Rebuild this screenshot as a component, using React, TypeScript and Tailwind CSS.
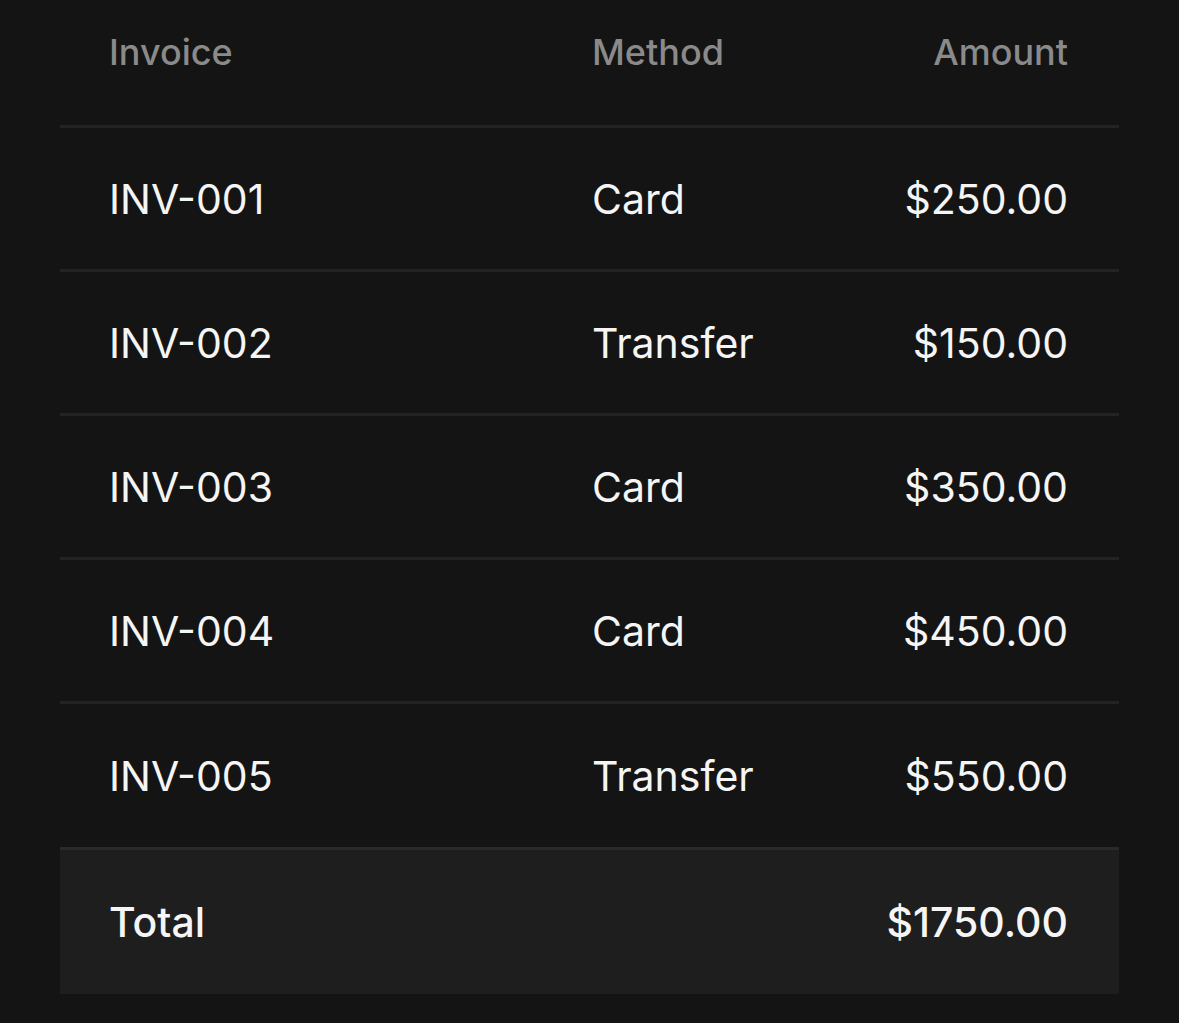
import React from "react"

type Invoice = {
  id: string
  method: string
  amount: string
}

const invoices: Invoice[] = [
  { id: "INV-001", method: "Card", amount: "$250.00" },
  { id: "INV-002", method: "Transfer", amount: "$150.00" },
  { id: "INV-003", method: "Card", amount: "$350.00" },
  { id: "INV-004", method: "Card", amount: "$450.00" },
  { id: "INV-005", method: "Transfer", amount: "$550.00" },
]

export default function App() {
  return (
    <div
      className="min-h-[1023px] w-full bg-[#141414] px-[60px] antialiased"
      style={{ fontFamily: "Inter, 'Noto Sans', sans-serif" }}
    >
      <table className="w-full table-fixed border-collapse">
        <colgroup>
          <col className="w-[532px]" />
          <col />
          <col className="w-[300px]" />
        </colgroup>
        <thead>
          <tr className="border-b-[3px] border-[#232323]">
            <th className="h-[126px] pb-[20px] pl-[49px] text-left align-middle text-[36px] font-medium text-[#8a8a8a]">
              Invoice
            </th>
            <th className="h-[126px] pb-[20px] text-left align-middle text-[36px] font-medium text-[#8a8a8a]">
              Method
            </th>
            <th className="h-[126px] pb-[20px] pr-[51px] text-right align-middle text-[36px] font-medium text-[#8a8a8a]">
              Amount
            </th>
          </tr>
        </thead>
        <tbody>
          {invoices.map((inv, i) => {
            const last = i === invoices.length - 1
            return (
              <tr key={inv.id} className={last ? "" : "border-b-[3px] border-[#232323]"}>
                <td className={`${last ? "h-[146px]" : "h-[144px]"} pl-[49px] pt-[4px] align-middle text-[41px] text-[#f5f5f5]`}>
                  {inv.id}
                </td>
                <td className={`${last ? "h-[146px]" : "h-[144px]"} pt-[4px] align-middle text-[41px] text-[#f5f5f5]`}>
                  {inv.method}
                </td>
                <td className={`${last ? "h-[146px]" : "h-[144px]"} pr-[51px] pt-[4px] text-right align-middle text-[41px] text-[#f5f5f5]`}>
                  {inv.amount}
                </td>
              </tr>
            )
          })}
        </tbody>
        <tfoot>
          <tr className="border-t-[3px] border-[#2a2a2a] bg-[#1e1e1e]">
            <td className="h-[146px] pl-[49px] pt-[2px] align-middle text-[41px] font-medium text-[#f5f5f5]">Total</td>
            <td className="h-[146px]" />
            <td className="h-[146px] pr-[51px] pt-[2px] text-right align-middle text-[41px] font-medium text-[#f5f5f5]">
              $1750.00
            </td>
          </tr>
        </tfoot>
      </table>
    </div>
  )
}
